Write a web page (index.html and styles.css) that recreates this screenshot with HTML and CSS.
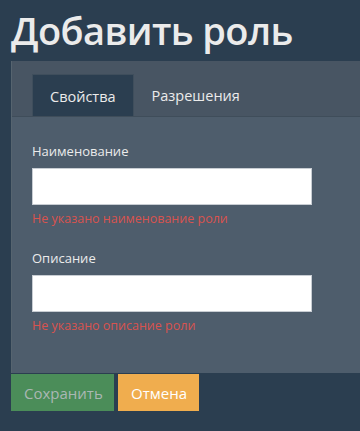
FILE: index.html
```html
<!DOCTYPE html>
<html lang="ru">
<head>
<meta charset="utf-8">
<link rel="stylesheet" href="styles.css">
</head>
<body>
<h1 class="title">Добавить роль</h1>
<div class="panel">
  <ul class="tabs">
    <li class="tab active">Свойства</li>
    <li class="tab">Разрешения</li>
  </ul>
  <div class="panel-body">
    <div class="field">
      <label class="label">Наименование</label>
      <input class="input" type="text">
      <div class="error">Не указано наименование роли</div>
    </div>
    <div class="field">
      <label class="label">Описание</label>
      <input class="input" type="text">
      <div class="error">Не указано описание роли</div>
    </div>
  </div>
</div>
<div class="actions">
  <button class="btn btn-save">Сохранить</button>
  <button class="btn btn-cancel">Отмена</button>
</div>
</body>
</html>
```
FILE: styles.css
```css
html, body {
  margin: 0;
  padding: 0;
  background: #2b3e50;
  font-family: "Open Sans", "Noto Sans", sans-serif;
  color: #ebebeb;
}
.title {
  margin: 0;
  padding: 4px 0 0 11px;
  height: 57px;
  font-size: 38px;
  font-weight: 600;
  line-height: 52px;
  color: #ebebeb;
  letter-spacing: -0.6px;
}
.panel {
  margin-left: 11px;
  background: #4e5d6c;
  border-left: 1px solid #56646f;
  height: 312px;
  box-sizing: border-box;
}
.tabs {
  list-style: none;
  margin: 0;
  padding: 13px 0 0 20px;
  display: flex;
  background: #485563;
  border-bottom: 1px solid #3f4d5a;
  height: 42px;
}
.tab {
  padding: 0 18px;
  height: 42px;
  line-height: 43px;
  font-size: 14.5px;
  color: #ebebeb;
  box-sizing: border-box;
}
.tab.active {
  background: #2b3e50;
  border: 1px solid #3f4e5c;
  border-bottom: none;
  padding: 0 17px;
}
.panel-body {
  padding: 25px 0 0 20px;
}
.field {
  display: flex;
  flex-direction: column;
  align-items: flex-start;
  margin-bottom: 22px;
}
.label {
  font-size: 13px;
  line-height: 18px;
  margin-bottom: 8px;
  color: #ebebeb;
}
.input {
  width: 280px;
  height: 37px;
  box-sizing: border-box;
  border: 1px solid #c8cdd3;
  background: #fff;
  margin: 0;
  padding: 0;
}
.error {
  margin-top: 6px;
  font-size: 12.5px;
  line-height: 16px;
  color: #d9534f;
}
.actions {
  display: flex;
  gap: 4px;
  padding: 1px 0 0 11px;
}
.btn {
  border: none;
  margin: 0;
  height: 37px;
  font-family: "Open Sans", "Noto Sans", sans-serif;
  font-size: 15px;
  color: #fff;
  padding: 0 13px;
}
.btn-save {
  background: #4b8d59;
  color: #aab7b4;
  width: 103px;
}
.btn-cancel {
  background: #f0ad4e;
  width: 81px;
}
```
